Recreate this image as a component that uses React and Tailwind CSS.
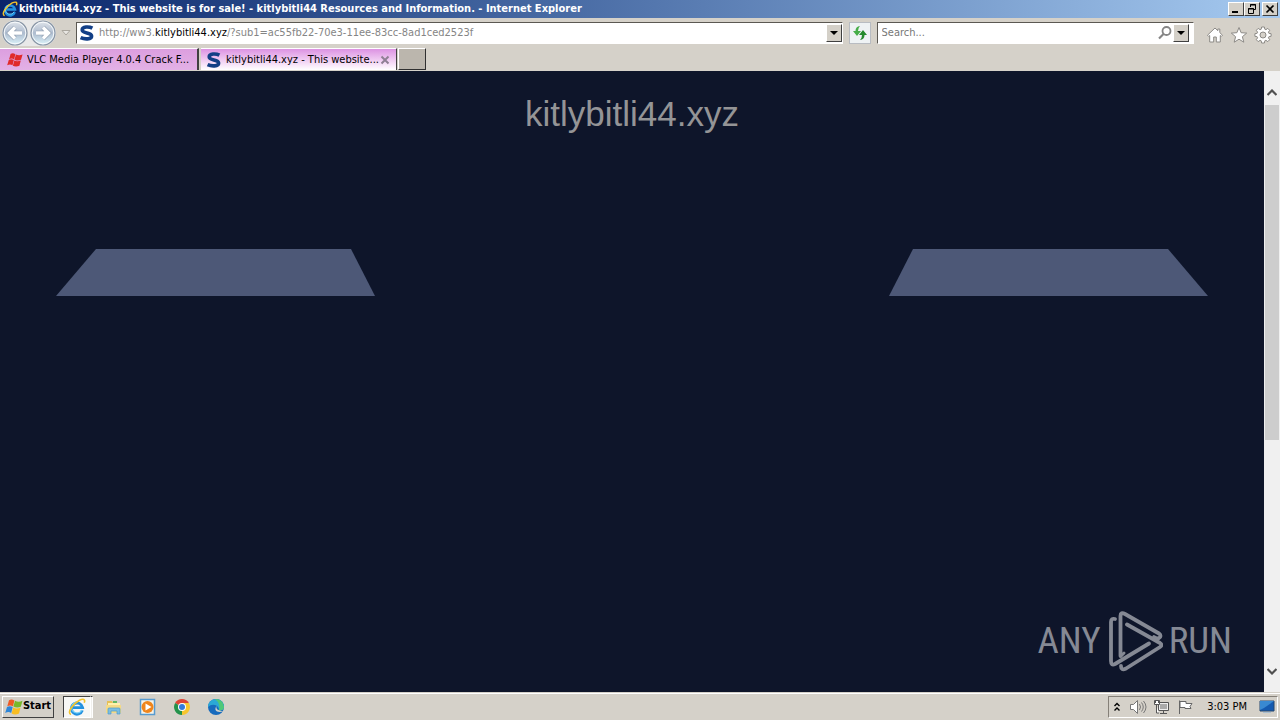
import React from "react";

const raised =
  "border border-t-white border-l-white border-r-[#404040] border-b-[#404040] bg-[#d4d0c8] flex items-center justify-center shrink-0";

function IeIcon({ className }) {
  return (
    <svg viewBox="0 0 18 18" className={className} aria-hidden="true">
      <path d="M14.4 12.4A5.6 5.6 0 1 1 14.6 9.6H5" fill="none" stroke="#2391df" strokeWidth="2.8" />
      <path d="M13.8 12A5.4 5.4 0 0 1 3.6 9.500Q4 5 8.500 4" fill="none" stroke="#72d0f8" strokeWidth="1.1" />
      <path d="M3 16.500C-1.500 15 4.500 6 11.500 2.200 15 .5 17.800 1 16.200 4.800" fill="none" stroke="#f3c32b" strokeWidth="1.6" />
    </svg>
  );
}

function SedoIcon() {
  return (
    <svg viewBox="0 0 16 16" className="size-4 shrink-0" aria-hidden="true">
      <path d="M13.400 3.200C10 1.400 3.200 1.400 3.200 5c0 3.800 9.400 2 9.400 5.900 0 3.700-7 3.600-11 1.700" fill="none" stroke="#123f86" strokeWidth="3.600" />
    </svg>
  );
}

function Flag({ className, mono }) {
  const c = mono ? ["#e02a2a", "#e02a2a", "#e02a2a", "#e02a2a"] : ["#ee5a24", "#78b82a", "#2e86d8", "#f8bd22"];
  return (
    <svg viewBox="0 0 18 16" className={className} aria-hidden="true">
      <path d="M4 1.2Q6.5-.2 9.400 1.400L8 7.300Q5.200 5.600 2.300 7.300Z" fill={c[0]} />
      <path d="M10 1.800Q13.500 3.600 17.500 1.800L15.800 7.800Q12 9.400 8.400 7.600Z" fill={c[1]} />
      <path d="M2 8Q4.800 6.500 7.700 8.100L6.200 13.900Q3.500 12.200 .2 13.900Z" fill={c[2]} />
      <path d="M8.200 8.500Q11.500 10.300 15.500 8.500L14 14.500Q10 16.300 6.600 14.500Z" fill={c[3]} />
    </svg>
  );
}

function Triangle() {
  return (
    <svg viewBox="0 0 8 4" className="h-1 w-2" aria-hidden="true">
      <path d="M0 0h8L4 4Z" fill="#000" />
    </svg>
  );
}

function NavArrow({ back }) {
  const arrow = back ? "M20 13H8M13 7.5 7.5 13l5.5 5.5" : "M6 13h12M13 7.5l5.5 5.5-5.5 5.5";
  const id = back ? "nav-back" : "nav-forward";
  return (
    <svg viewBox="0 0 26 26" className="size-[26px]" aria-hidden="true">
      <defs>
        <linearGradient id={id} x1="0" y1="0" x2="0" y2="1">
          <stop offset="0" stopColor="#e0e4ea" />
          <stop offset=".5" stopColor="#aebccf" />
          <stop offset="1" stopColor="#dcf4fb" />
        </linearGradient>
      </defs>
      <circle cx="13" cy="13" r="12" fill={"url(#" + id + ")"} stroke="#8794a4" strokeWidth="1.2" />
      <circle cx="13" cy="13" r="10.8" fill="none" stroke="#f7fafc" />
      <path d={arrow} fill="none" stroke="#8c9bae" strokeWidth="4.6" />
      <path d={arrow} fill="none" stroke="#fff" strokeWidth="3.4" />
    </svg>
  );
}

function TitleBar() {
  return (
    <header className="flex h-[18px] shrink-0 items-center bg-linear-to-r from-[#0a246a] to-[#a6caf0] pl-0.5 pr-0.5">
      <IeIcon className="size-4 shrink-0" />
      <h1 className="ml-px flex-1 truncate text-[11px] leading-4 font-bold text-white">
        kitlybitli44.xyz - This website is for sale! - kitlybitli44 Resources and Information. - Internet Explorer
      </h1>
      <button aria-label="Minimize" className={raised + " h-3.5 w-4"}>
        <svg viewBox="0 0 12 10" className="h-2.5 w-3" aria-hidden="true"><path d="M2 7h6v2H2z" /></svg>
      </button>
      <button aria-label="Restore" className={raised + " h-3.5 w-4"}>
        <svg viewBox="0 0 12 10" className="h-2.5 w-3" aria-hidden="true">
          <path d="M4.5 3V.5h5v5H8M4 1h6M2.5 4.5h5v5h-5zM2 5h6" fill="none" stroke="#000" />
        </svg>
      </button>
      <button aria-label="Close" className={raised + " ml-0.5 h-3.5 w-4"}>
        <svg viewBox="0 0 12 10" className="h-2.5 w-3" aria-hidden="true">
          <path d="M2.5 1.5l7 7M9.5 1.5l-7 7" stroke="#000" strokeWidth="1.7" />
        </svg>
      </button>
    </header>
  );
}

const sunken = "flex h-[22px] items-center border border-t-[#5b5852] border-l-[#5b5852] border-r-white border-b-white bg-white";

function Toolbar() {
  return (
    <div className="flex h-[30px] shrink-0 items-center bg-[#d5d1c9] pl-0.5 pr-2">
      <div className="flex gap-0.5 rounded-full bg-[#e8e8e8]">
        <button aria-label="Back"><NavArrow back /></button>
        <button aria-label="Forward"><NavArrow /></button>
      </div>
      <button aria-label="Recent pages" className="mx-0.5 flex w-4 justify-center">
        <svg viewBox="0 0 10 6" className="h-1.5 w-2.5" aria-hidden="true"><path d="M1 .5h8L5 5Z" fill="#e8e6e2" stroke="#aaa69e" /></svg>
      </button>
      <div className={sunken + " min-w-0 flex-1 pl-0.5"}>
        <SedoIcon />
        <div role="textbox" aria-label="Address" tabIndex={0} className="ml-1 flex-1 truncate text-[11px] leading-4 text-[#858585]">
          http://ww3.<span className="text-black">kitlybitli44.xyz</span>/?sub1=ac55fb22-70e3-11ee-83cc-8ad1ced2523f
        </div>
        <button aria-label="Show addresses" className={raised + " h-[18px] w-4"}><Triangle /></button>
      </div>
      <button aria-label="Refresh" className="mx-1.5 flex size-[22px] shrink-0 items-center justify-center border border-[#b8bcc2] bg-[#eef2f4]">
        <svg viewBox="0 0 16 16" className="size-4" aria-hidden="true">
          <path d="M8 1Q3.500 1.500 3.500 6H1l4 5 4-5H6Q6 3 8 1Z" fill="#45ad48" />
          <path d="M8 15q4.500-.5 4.500-5H15l-4-5-4 5h3q0 3-2 5Z" fill="#238a2b" />
        </svg>
      </button>
      <div className={sunken + " w-1/4 pr-1"}>
        <input aria-label="Search" placeholder="Search..." className="min-w-0 flex-1 bg-transparent pl-1 text-[11px] leading-4 outline-none placeholder:text-[#777]" />
        <button aria-label="Run search">
          <svg viewBox="0 0 16 16" className="size-4" aria-hidden="true">
            <circle cx="9.5" cy="6" r="4" fill="none" stroke="#858585" strokeWidth="1.8" /><path d="M6.5 9 2 13.5" stroke="#858585" strokeWidth="2.2" />
          </svg>
        </button>
        <button aria-label="Search options" className={raised + " h-[18px] w-4"}><Triangle /></button>
      </div>
      <div className="ml-3 flex shrink-0 gap-1.5 pt-1">
        <button aria-label="Home">
          <svg viewBox="0 0 18 18" className="size-[18px]" aria-hidden="true">
            <path d="M9 2 1.5 9.2l1.2 1.2 1-.9V16h4v-5h2.6v5h4V9.5l1 .9 1.2-1.2-2.7-2.6V3h-2v1.7Z" fill="#fff" stroke="#8c8a86" />
          </svg>
        </button>
        <button aria-label="Favorites">
          <svg viewBox="0 0 18 18" className="size-[18px]" aria-hidden="true">
            <path d="m9 1.500 2.100 5.200 5.600.4-4.300 3.600 1.400 5.500L9 13.200l-4.800 3 1.400-5.500L1.300 7.100l5.600-.4Z" fill="#fff" stroke="#8c8a86" />
          </svg>
        </button>
        <button aria-label="Tools">
          <svg viewBox="0 0 18 18" className="size-[18px]" aria-hidden="true">
            <path d="m7.6 1 h2.8l.4 2.2 1.1.5 1.9-1.3 1.9 1.9-1.3 1.9.5 1.1 2.2.4v2.6l-2.2.4-.5 1.1 1.3 1.9-1.9 1.9-1.9-1.3-1.1.5-.4 2.2H7.6l-.4-2.2-1.1-.5-1.9 1.3-1.9-1.9 1.3-1.9-.5-1.1-2.2-.4V7.7l2.2-.4.5-1.1-1.3-1.9 1.9-1.9 1.9 1.3 1.1-.5Z" fill="#fff" stroke="#8c8a86" />
            <circle cx="9" cy="9" r="3" fill="#d5d1c9" stroke="#8c8a86" />
          </svg>
        </button>
      </div>
    </div>
  );
}

function Tabs() {
  return (
    <nav aria-label="Tabs" className="flex h-[23px] shrink-0 bg-[#d5d1c9] pb-px text-[11px] leading-4">
      <button className="flex w-[199px] items-center border-t border-r-2 border-t-white border-r-[#404040] bg-linear-to-b from-[#dc9edf] to-[#e3b1e6] pl-[7px]">
        <Flag mono className="size-4 shrink-0" />
        <span className="ml-1 truncate">VLC Media Player 4.0.4 Crack F...</span>
      </button>
      <div className="ml-0.5 flex w-[196px] items-center border-t border-r border-t-white border-r-[#404040] bg-linear-to-b from-[#dc92e2] to-white pl-[5px] pr-1.5">
        <button className="flex min-w-0 flex-1 items-center">
          <SedoIcon />
          <span className="ml-1 whitespace-nowrap">kitlybitli44.xyz - This website...</span>
        </button>
        <button aria-label="Close tab">
          <svg viewBox="0 0 10 10" className="size-2.5" aria-hidden="true"><path d="m1.5 1.5 7 7m0-7-7 7" stroke="#8f7f94" strokeWidth="2" /></svg>
        </button>
      </div>
      <button aria-label="New tab" className="ml-px w-7 border border-t-white border-l-white border-r-[#303030] border-b-[#303030] bg-[#bbb6ad]" />
    </nav>
  );
}

const wordmark = "font-['Roboto_Condensed','Liberation_Sans_Narrow','Liberation_Sans',sans-serif] text-[37px] leading-[62px]";

function Watermark() {
  return (
    <div className="absolute right-8 bottom-5 flex items-center gap-1.5 text-[#858994]">
      <span className={wordmark}>ANY</span>
      <svg viewBox="0 0 56 62" className="h-[62px] w-14" fill="none" stroke="currentColor" strokeWidth="3.800" strokeLinejoin="round" strokeLinecap="round" aria-hidden="true">
        <path d="M8 9Q4 8 4 12V51Q4 56 8 54L42 33.500" />
        <path d="M13.500 46V6Q13.500 1.500 18 4L52 23.500Q55 26 52 28Q50 29 47 27" />
        <path d="M20 14.500 53 33Q56 35 53 37L19 58.500Q14 61 14 56" />
        <path d="M14 46 17 43" strokeWidth="3" />
      </svg>
      <span className={wordmark}>RUN</span>
    </div>
  );
}

function Page() {
  return (
    <main className="relative min-w-0 flex-1 overflow-hidden bg-[#0e152a]">
      <h2 className="pt-[23px] text-center font-['Liberation_Sans',Arial,sans-serif] text-[35px] leading-10 text-[#949496]">kitlybitli44.xyz</h2>
      <div className="mt-[115px] flex justify-between px-14">
        <svg viewBox="0 0 319 47" className="h-[47px] w-[319px]" aria-hidden="true"><path d="M40 0h255l24 47H0Z" fill="#4d5877" /></svg>
        <svg viewBox="0 0 319 47" className="h-[47px] w-[319px]" aria-hidden="true"><path d="M24 0h255l40 47H0Z" fill="#4d5877" /></svg>
      </div>
      <Watermark />
    </main>
  );
}

function ScrollBar() {
  return (
    <div className="flex w-4 shrink-0 flex-col bg-[#f0f0f0] py-[13px]">
      <button aria-label="Scroll up" className="flex h-[21px] justify-center pt-[5px]">
        <svg viewBox="0 0 10 7" className="h-[7px] w-2.5" aria-hidden="true"><path d="m.5 6 4.500-4.500L9.500 6" fill="none" stroke="#505050" strokeWidth="2.200" /></svg>
      </button>
      <div className="flex-1 px-px"><div className="h-3/5 bg-[#cdcdcd]" /></div>
      <button aria-label="Scroll down" className="flex h-4 items-center justify-center">
        <svg viewBox="0 0 10 7" className="h-[7px] w-2.5" aria-hidden="true"><path d="m.5 1 4.500 4.500L9.500 1" fill="none" stroke="#505050" strokeWidth="2.200" /></svg>
      </button>
    </div>
  );
}

function TaskBar() {
  return (
    <footer className="flex h-7 shrink-0 items-center border-t border-[#d5d1c9] bg-[#d5d1c9] px-0.5 text-[11px] shadow-[inset_0_1px_0_white]">
      <button className={raised + " h-[22px] w-[52px] font-bold"}>
        <Flag className="h-4 w-[18px] shrink-0" />Start
      </button>
      <div className="ml-[9px] flex items-center">
        <button aria-label="Internet Explorer" className="flex h-[22px] w-7 items-center justify-center border border-t-[#404040] border-l-[#404040] border-r-white border-b-white bg-[#f7f7f5]"><IeIcon className="size-[18px]" /></button>
        <span className="h-[22px] w-0.5 border-t border-r border-t-[#404040] border-r-white bg-[#f0efec]" />
        <button aria-label="File Explorer" className="ml-3">
          <svg viewBox="0 0 18 18" className="size-[18px]" aria-hidden="true">
            <path d="M2 3h5l1 2h7v10H2Z" fill="#e6bf56" /><path d="M3 5h12v4H3z" fill="#fff1ad" /><path d="M1 7h15v8H1z" fill="#f5da86" />
            <path d="M3 16v-5q0-1 1-1h10q1 0 1 1v5h-3v-3H6v3Z" fill="#7cbde2" stroke="#4f9bc8" strokeWidth=".7" />
            <path d="M8 3h4v2H8z" fill="#63b765" />
          </svg>
        </button>
        <button aria-label="Media Player" className="ml-4">
          <svg viewBox="0 0 18 18" className="size-[18px]" aria-hidden="true">
            <path d="M1.5 1.5h14v15h-14z" fill="#f6f3e9" stroke="#579bd0" strokeWidth="1.5" /><circle cx="8.5" cy="9" r="6" fill="#ef851c" /><path d="m6.5 5.5 6 3.5-6 3.5Z" fill="#fff" />
          </svg>
        </button>
        <button aria-label="Chrome" className="ml-4">
          <svg viewBox="0 0 18 18" className="size-[18px]" aria-hidden="true">
            <path d="M9 9 2.1 5A8 8 0 0 1 15.9 5Z" fill="#df4435" /><path d="M9 9V5h6.9A8 8 0 0 1 9 17Z" fill="#f7c62f" /><path d="M9 9v8A8 8 0 0 1 2.1 5Z" fill="#24924b" />
            <circle cx="9" cy="9" r="4" fill="#fff" /><circle cx="9" cy="9" r="3" fill="#357bdc" />
          </svg>
        </button>
        <button aria-label="Edge" className="ml-4">
          <svg viewBox="0 0 18 18" className="size-[18px]" aria-hidden="true">
            <circle cx="9" cy="9" r="8" fill="#176bbd" />
            <path d="M1 9A8 8 0 0 1 17 9Q17 12.500 12 12.500 12 8 8 7 4 6 1 9Z" fill="#2ba9d6" />
            <path d="M8 1.100Q16 1 17 9q0 3.500-5 3.500Q14 6 8 1.100Z" fill="#50c878" />
            <path d="M9.500 8q-1.500 4.500 6.500 5.200-3 1.300-6 .3-3-2-.5-5.500Z" fill="#d5d1c9" />
          </svg>
        </button>
      </div>
      <div className="ml-auto flex h-[22px] items-center border border-t-[#858078] border-l-[#858078] border-r-white border-b-white pl-1 pr-0.5">
        <button aria-label="Show hidden icons" className="mr-2">
          <svg viewBox="0 0 8 10" className="h-2.5 w-2" aria-hidden="true"><path d="M1.5 4 4 1.500 6.500 4M1.500 8.500 4 6l2.500 2.500" fill="none" stroke="#000" strokeWidth="1.400" /></svg>
        </button>
        <button aria-label="Volume">
          <svg viewBox="0 0 18 16" className="h-4 w-[18px]" aria-hidden="true"><path d="M1.500 5.500h3l4-4v13l-4-4h-3Z" fill="#fff" stroke="#777" /><path d="M10.500 5q2 3 0 6M12.500 3.500q3.500 4.500 0 9M14.500 2q5 6 0 12" fill="none" stroke="#777" /></svg>
        </button>
        <button aria-label="Network" className="ml-1.5">
          <svg viewBox="0 0 18 16" className="h-4 w-[18px]" aria-hidden="true"><path d="M5.500 3.500h10v8h-10zM7 14.500h7M10.500 12v2" fill="#eee" stroke="#555" /><path d="M7 5h7v5H7z" fill="#aaa" /><path d="M1.500 1.500h5v4h-5zM3.500 6v8H6M2.500 1v3M5.500 1v3" fill="#fff" stroke="#555" /></svg>
        </button>
        <button aria-label="Action Center" className="ml-1.5">
          <svg viewBox="0 0 18 16" className="h-4 w-[18px]" aria-hidden="true"><path d="M2.500 15V1.500M3 2.500h6v2h6l-2 3 1 2H8v-1H3Z" fill="#fff" stroke="#666" /></svg>
        </button>
        <time className="mx-3 whitespace-nowrap leading-4">3:03 PM</time>
        <button aria-label="Show desktop">
          <svg viewBox="0 0 16 16" className="size-4" aria-hidden="true"><path d="M1 2h14v10H1z" fill="#155ab0" stroke="#24466f" /><path d="M1 2h14L5 9 1 11Z" fill="#3989d2" /><path d="M4 13h8v1H4z" fill="#a9bed0" /></svg>
        </button>
      </div>
    </footer>
  );
}

export default function App() {
  return (
    <div className="flex h-screen flex-col overflow-hidden font-['DejaVu_Sans_Condensed','DejaVu_Sans',sans-serif] text-black">
      <TitleBar />
      <Toolbar />
      <Tabs />
      <div className="flex min-h-0 flex-1">
        <Page />
        <ScrollBar />
      </div>
      <TaskBar />
    </div>
  );
}
